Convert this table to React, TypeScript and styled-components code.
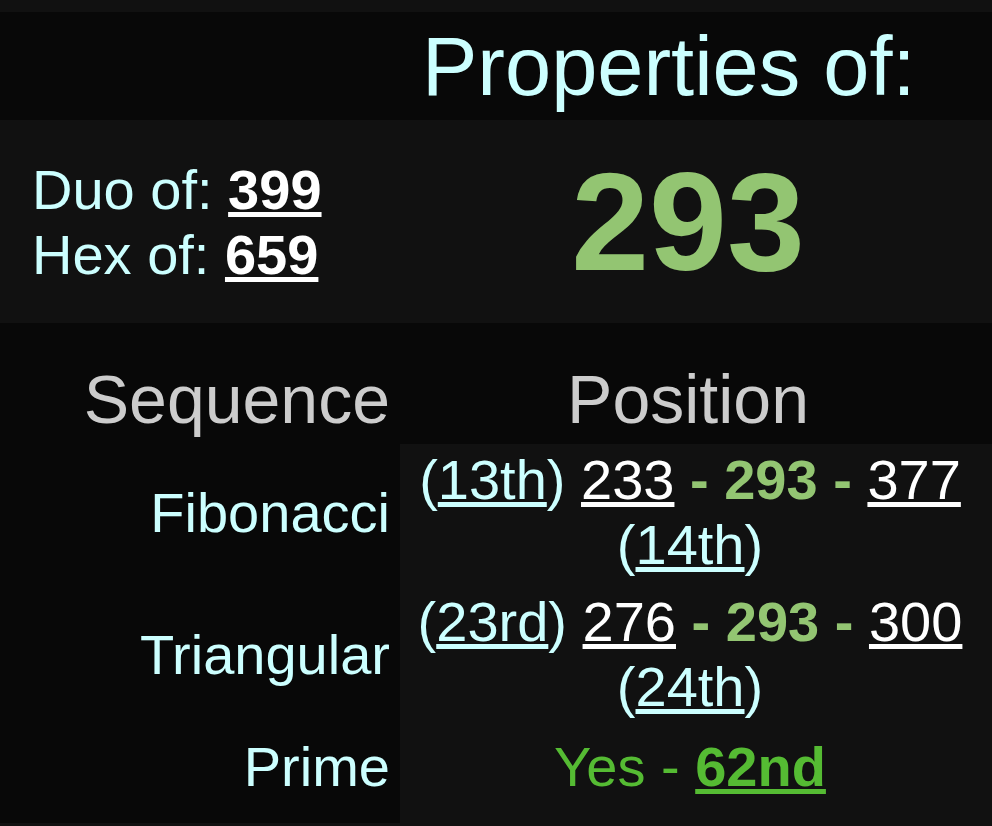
import React from "react";
import styled, { createGlobalStyle } from "styled-components";

const GlobalStyle = createGlobalStyle`
  html, body {
    margin: 0;
    padding: 0;
    background: #111111;
  }
  body {
    font-family: "Liberation Sans", Arial, Helvetica, sans-serif;
  }
`;

const Page = styled.div`
  padding: 12px 0 6px;
`;

const Table = styled.div`
  display: grid;
  grid-template-columns: 400px 1fr;
`;

const Cell = styled.div<{ $dark?: boolean; $align?: string; $pad?: string }>`
  background: ${(p) => (p.$dark ? "#080808" : "#111111")};
  text-align: ${(p) => p.$align || "center"};
  padding: ${(p) => p.$pad || "0"};
  display: flex;
  flex-direction: column;
  justify-content: center;
  align-items: ${(p) =>
    p.$align === "right" ? "flex-end" : p.$align === "left" ? "flex-start" : "center"};
`;

const Title = styled.div`
  font-size: 83px;
  color: #ccffff;
  line-height: 95px;
`;

const Aliases = styled.div`
  font-size: 56px;
  color: #ccffff;
  text-align: left;
  padding-left: 32px;
`;

const Strong = styled.a<{ $color?: string }>`
  font-weight: bold;
  color: ${(p) => p.$color || "#ffffff"};
  text-decoration: underline;
`;

const BigNumber = styled.div`
  font-size: 140px;
  font-weight: bold;
  color: #93c572;
  line-height: 161px;
  padding-right: 16px;
`;

const Heading = styled.div<{ $right?: number }>`
  font-size: 68px;
  color: #cccccc;
  line-height: 78px;
  padding-right: ${(p) => p.$right ?? 0}px;
`;

const Label = styled.div`
  font-size: 56px;
  color: #ccffff;
  padding-right: 10px;
`;

const Value = styled.div`
  font-size: 56px;
  color: #ffffff;
  text-align: center;
  padding: 0 28px 0 16px;
`;

const Ordinal = styled.span`
  color: #ccffff;
`;

const Link = styled.a<{ $color?: string }>`
  color: ${(p) => p.$color || "#ffffff"};
  text-decoration: underline;
`;

const Current = styled.b`
  color: #93c572;
`;

const PrimeText = styled.span`
  color: #55bb33;
`;

type SeqRow = {
  name: string;
  before: [string, string];
  after: [string, string];
};

const rows: SeqRow[] = [
  { name: "Fibonacci", before: ["13th", "233"], after: ["377", "14th"] },
  { name: "Triangular", before: ["23rd", "276"], after: ["300", "24th"] },
];

const App: React.FC = () => {
  return (
    <Page>
      <GlobalStyle />
      <Table>
        <Cell $dark />
        <Cell $dark $align="left" $pad="7px 0 6px 22px">
          <Title>Properties of:</Title>
        </Cell>

        <Cell $align="left" $pad="21px 0">
          <Aliases>
            Duo of: <Strong>399</Strong>
            <br />
            Hex of: <Strong>659</Strong>
          </Aliases>
        </Cell>
        <Cell $pad="21px 0">
          <BigNumber>293</BigNumber>
        </Cell>

        <Cell $dark $align="right" $pad="37px 0 6px">
          <Heading $right={10}>Sequence</Heading>
        </Cell>
        <Cell $dark $pad="37px 0 6px">
          <Heading $right={16}>Position</Heading>
        </Cell>

        {rows.map((r) => (
          <React.Fragment key={r.name}>
            <Cell $dark $align="right" $pad="3px 0 9px">
              <Label>{r.name}</Label>
            </Cell>
            <Cell $pad="3px 0 9px">
              <Value>
                <Ordinal>
                  (<Link $color="#ccffff">{r.before[0]}</Link>)
                </Ordinal>{" "}
                <Link>{r.before[1]}</Link>{" "}
                <Current>- 293 -</Current> <Link>{r.after[0]}</Link>{" "}
                <Ordinal>
                  (<Link $color="#ccffff">{r.after[1]}</Link>)
                </Ordinal>
              </Value>
            </Cell>
          </React.Fragment>
        ))}

        <Cell $dark $align="right" $pad="6px 0 24px">
          <Label>Prime</Label>
        </Cell>
        <Cell $pad="6px 0 24px">
          <Value>
            <PrimeText>
              Yes - <Strong $color="#55bb33">62nd</Strong>
            </PrimeText>
          </Value>
        </Cell>
      </Table>
    </Page>
  );
};

export default App;
